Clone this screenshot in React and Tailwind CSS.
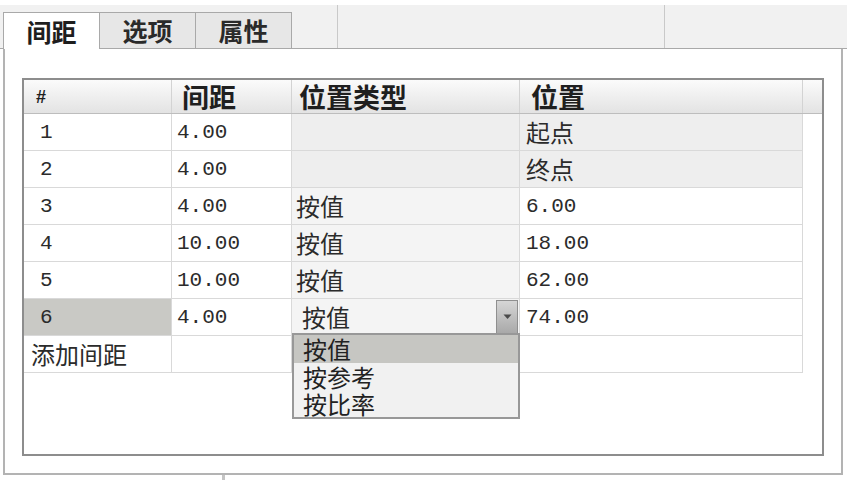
import React from 'react'

const CJK = { fontFamily: '"Noto Sans CJK SC", "Noto Sans", sans-serif' }
const MONO = { fontFamily: '"Liberation Mono", "Noto Sans CJK SC", monospace' }

const COLS = ['w-[148px]', 'w-[120px]', 'w-[228px]', 'w-[283px]']

const ROWS = [
  { n: '1', gap: '4.00', type: '', pos: '起点', fixed: true },
  { n: '2', gap: '4.00', type: '', pos: '终点', fixed: true },
  { n: '3', gap: '4.00', type: '按值', pos: '6.00' },
  { n: '4', gap: '10.00', type: '按值', pos: '18.00' },
  { n: '5', gap: '10.00', type: '按值', pos: '62.00' },
]

function Tab({ label, active }) {
  if (active) {
    return (
      <div
        className="relative z-10 -mb-px flex h-[37px] w-[97px] items-center justify-center border border-b-0 border-[#a9a9a9] bg-white text-[25px] font-bold leading-none text-[#1e1e1e]"
        style={CJK}
      >
        {label}
      </div>
    )
  }
  return (
    <div
      className="flex h-[36px] w-[96px] items-center justify-center border border-l-0 border-b-0 border-[#a9a9a9] bg-[#e7e7e7] text-[25px] font-bold leading-none text-[#2a2a2a]"
      style={CJK}
    >
      {label}
    </div>
  )
}

function Cell({ w, bg = 'bg-white', children, className = '' }) {
  return (
    <div
      className={`${w} ${bg} flex h-[37px] shrink-0 items-center border-b border-r border-[#d9d9d9] text-[#2b2b2b] ${className}`}
    >
      {children}
    </div>
  )
}

function Num({ children }) {
  return (
    <span className="block text-[21px] leading-none" style={MONO}>
      {children}
    </span>
  )
}

function Han({ children }) {
  return (
    <span className="block text-[24px] leading-none" style={CJK}>
      {children}
    </span>
  )
}

export default function App() {
  return (
    <div className="h-[480px] w-[847px] overflow-hidden bg-white">
      <div className="h-[5px]" />

      {/* tab strip */}
      <div className="flex h-[44px] items-end border-b border-[#a9a9a9] bg-[#f1f1f1]">
        <div className="w-[3px]" />
        <Tab label="间距" active />
        <Tab label="选项" />
        <Tab label="属性" />
        <div className="h-full w-[45px]" />
        <div className="h-full w-px bg-[#c9c9c9]" />
        <div className="h-full w-[326px]" />
        <div className="h-full w-px bg-[#c9c9c9]" />
      </div>

      {/* panel */}
      <div className="ml-[3px] h-[426px] w-[840px] border-2 border-t-0 border-[#b3b3b3] bg-white pl-[17px] pt-[29px]">
        <div className="h-[378px] w-[802px] border-2 border-[#8d8d8d] bg-white">
          {/* header */}
          <div className="flex h-[34px] border-b border-[#bdbdbd] bg-gradient-to-b from-[#fbfbfb] to-[#e3e3e3] text-[#1f1f1f]">
            <div className={`${COLS[0]} flex items-center border-r border-[#d3d3d3] pl-[12px]`}>
              <span className="block text-[18px] font-bold leading-none" style={{ fontFamily: '"Liberation Sans", sans-serif' }}>#</span>
            </div>
            <div className={`${COLS[1]} flex items-center border-r border-[#d3d3d3] pl-[10px]`}>
              <span className="block text-[27px] font-bold leading-none" style={CJK}>间距</span>
            </div>
            <div className={`${COLS[2]} flex items-center border-r border-[#d3d3d3] pl-[7px]`}>
              <span className="block text-[27px] font-bold leading-none" style={CJK}>位置类型</span>
            </div>
            <div className={`${COLS[3]} flex items-center border-r border-[#d3d3d3] pl-[11px]`}>
              <span className="block text-[27px] font-bold leading-none" style={CJK}>位置</span>
            </div>
            <div className="flex-1" />
          </div>

          {ROWS.map(r => (
            <div key={r.n} className="flex">
              <Cell w={COLS[0]} className="pl-4"><Num>{r.n}</Num></Cell>
              <Cell w={COLS[1]} className="pl-[5px]"><Num>{r.gap}</Num></Cell>
              <Cell w={COLS[2]} bg={r.fixed ? 'bg-[#eeeeee]' : 'bg-[#f4f4f4]'} className="pl-[4px]">
                <Han>{r.type}</Han>
              </Cell>
              <Cell w={COLS[3]} bg={r.fixed ? 'bg-[#eeeeee]' : 'bg-white'} className="pl-[6px]">
                {r.fixed ? <Han>{r.pos}</Han> : <Num>{r.pos}</Num>}
              </Cell>
            </div>
          ))}

          {/* row 6 with open combobox */}
          <div className="flex">
            <Cell w={COLS[0]} bg="bg-[#c9c9c5]" className="pl-4"><Num>6</Num></Cell>
            <Cell w={COLS[1]} className="pl-[5px]"><Num>4.00</Num></Cell>
            <div className={`${COLS[2]} relative z-10 flex h-[37px] shrink-0 border-b border-r border-[#d9d9d9] bg-[#f4f4f4]`}>
              <div className="flex flex-1 items-center pl-[10px] text-[#2b2b2b]">
                <Han>按值</Han>
              </div>
              <div className="my-[1px] mr-px flex w-[22px] items-center justify-center border border-[#8f8f8f] bg-gradient-to-b from-[#d6d6d6] to-[#a9a9a9]">
                <svg width="9" height="6" viewBox="0 0 9 6">
                  <path d="M0.5 0.5 L8.5 0.5 L4.5 5 Z" fill="#4a4a4a" />
                </svg>
              </div>

              <div className="absolute left-0 top-[34px] flex h-[86px] w-[228px] flex-col border-2 border-[#989898] bg-[#f1f1f1] text-[#222]">
                <div className="flex h-[28px] items-center bg-[#c6c6c2] pl-[9px]"><Han>按值</Han></div>
                <div className="flex h-[28px] items-center pl-[9px]"><Han>按参考</Han></div>
                <div className="flex h-[26px] items-center pl-[9px]"><Han>按比率</Han></div>
              </div>
            </div>
            <Cell w={COLS[3]} className="pl-[6px]"><Num>74.00</Num></Cell>
          </div>

          {/* add row */}
          <div className="flex">
            <Cell w={COLS[0]} className="pl-[7px]"><Han>添加间距</Han></Cell>
            <Cell w={COLS[1]} />
            <Cell w={COLS[2]} />
            <Cell w={COLS[3]} />
          </div>
        </div>
      </div>

      <div className="ml-[222px] h-[6px] w-[3px] bg-[#c4c4c4]" />
    </div>
  )
}
